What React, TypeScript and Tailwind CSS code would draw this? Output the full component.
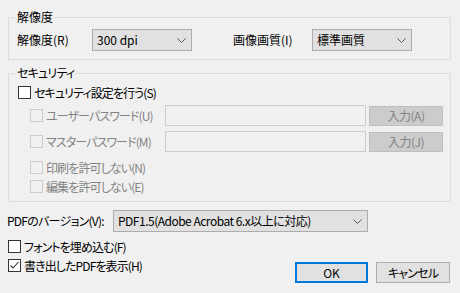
import React from 'react';

const Chevron = () => (
  <svg width="9" height="5" viewBox="0 0 9 5" className="shrink-0">
    <polyline points="0.5,0.5 4.5,4.5 8.5,0.5" fill="none" stroke="#555" strokeWidth="1" />
  </svg>
);

const Combo = ({ text, className, textClass = '' }: { text: string; className: string; textClass?: string }) => (
  <div className={`flex h-[22px] items-center justify-between border border-[#adadad] bg-[#e1e1e1] pl-[4px] pr-[5px] ${className}`}>
    <span className={`whitespace-nowrap ${textClass}`}>{text}</span>
    <Chevron />
  </div>
);

const Check = ({ checked = false, disabled = false }: { checked?: boolean; disabled?: boolean }) => (
  <div
    className={`flex h-[13px] w-[13px] shrink-0 items-center justify-center border ${
      disabled ? 'border-[#cccccc] bg-[#f0f0f0]' : 'border-[#333333] bg-white'
    }`}
  >
    {checked && (
      <svg width="11" height="11" viewBox="0 0 11 11">
        <polyline points="1.5,5.5 4,8 9.5,2" fill="none" stroke="#333" strokeWidth="1.1" />
      </svg>
    )}
  </div>
);

const CheckRow = ({ label, checked, disabled }: { label: string; checked?: boolean; disabled?: boolean }) => (
  <div className={`flex h-[13px] items-center gap-[3px] ${disabled ? 'text-[#838383]' : 'text-black'}`}>
    <Check checked={checked} disabled={disabled} />
    <span className="whitespace-nowrap leading-[16px] tracking-[-0.9px]">{label}</span>
  </div>
);

const GroupTitle = ({ text, tight = false }: { text: string; tight?: boolean }) => (
  <div className={`-mt-[9px] ml-[7px] h-[16px] w-fit bg-[#f0f0f0] px-[1px] leading-[16px] ${tight ? 'tracking-[-0.8px]' : ''}`}>
    {text}
  </div>
);

const PasswordRow = ({ label, button }: { label: string; button: string }) => (
  <div className="flex h-[21px] items-center pl-[21px]">
    <div className="w-[135px] shrink-0">
      <CheckRow label={label} disabled />
    </div>
    <div className="h-[21px] w-[201px] border border-[#cccccc] bg-[#f0f0f0]" />
    <div className="ml-[3px] flex h-[20px] w-[74px] items-center justify-center border border-[#bfbfbf] bg-[#cccccc] text-[#838383] tracking-[-0.5px]">
      {button}
    </div>
  </div>
);

export default function App() {
  return (
    <div
      className="h-[293px] w-[460px] overflow-hidden bg-[#f0f0f0] text-[12px] leading-[16px] text-black [font-feature-settings:'palt']"
      style={{ fontFamily: '"Noto Sans CJK JP", "Noto Sans", sans-serif' }}
    >
      {/* 解像度 */}
      <div className="ml-[8px] mt-[17px] h-[43px] w-[443px] border border-[#dcdcdc]">
        <GroupTitle text="解像度" />
        <div className="mt-[4px] flex items-center pl-[8px]">
          <span className="w-[75px] whitespace-nowrap">解像度(R)</span>
          <Combo text="300 dpi" className="w-[100px]" />
          <span className="ml-[41px] w-[79px] whitespace-nowrap">画像画質(I)</span>
          <Combo text="標準画質" className="w-[100px]" />
        </div>
      </div>

      {/* セキュリティ */}
      <div className="ml-[8px] mt-[13px] h-[129px] w-[443px] border border-[#dcdcdc]">
        <GroupTitle text="セキュリティ" tight />
        <div className="mt-[5px] pl-[9px]">
          <CheckRow label="セキュリティ設定を行う(S)" />
        </div>
        <div className="mt-[6px]">
          <PasswordRow label="ユーザーパスワード(U)" button="入力(A)" />
        </div>
        <div className="mt-[5px]">
          <PasswordRow label="マスターパスワード(M)" button="入力(J)" />
        </div>
        <div className="mt-[9px] pl-[21px]">
          <CheckRow label="印刷を許可しない(N)" disabled />
        </div>
        <div className="mt-[6px] pl-[21px]">
          <CheckRow label="編集を許可しない(E)" disabled />
        </div>
      </div>

      {/* PDF version */}
      <div className="ml-[7px] mt-[8px] flex items-center">
        <span className="w-[106px] shrink-0 whitespace-nowrap tracking-[-0.75px]">PDFのバージョン(V):</span>
        <Combo text="PDF1.5(Adobe Acrobat 6.x以上に対応)" className="w-[255px]" textClass="tracking-[-0.5px]" />
      </div>

      <div className="ml-[8px] mt-[8px]">
        <CheckRow label="フォントを埋め込む(F)" />
      </div>

      <div className="ml-[8px] mr-[10px] mt-[6px] flex items-start justify-between">
        <CheckRow label="書き出したPDFを表示(H)" checked />
        <div className="mt-[3px] flex gap-[8px]">
          <button className="flex h-[21px] w-[73px] items-center justify-center border-2 border-[#0078d7] bg-[#e1e1e1]">
            OK
          </button>
          <button className="flex h-[21px] w-[74px] items-center justify-center border border-[#adadad] bg-[#e1e1e1] tracking-[-0.8px]">
            キャンセル
          </button>
        </div>
      </div>
    </div>
  );
}
